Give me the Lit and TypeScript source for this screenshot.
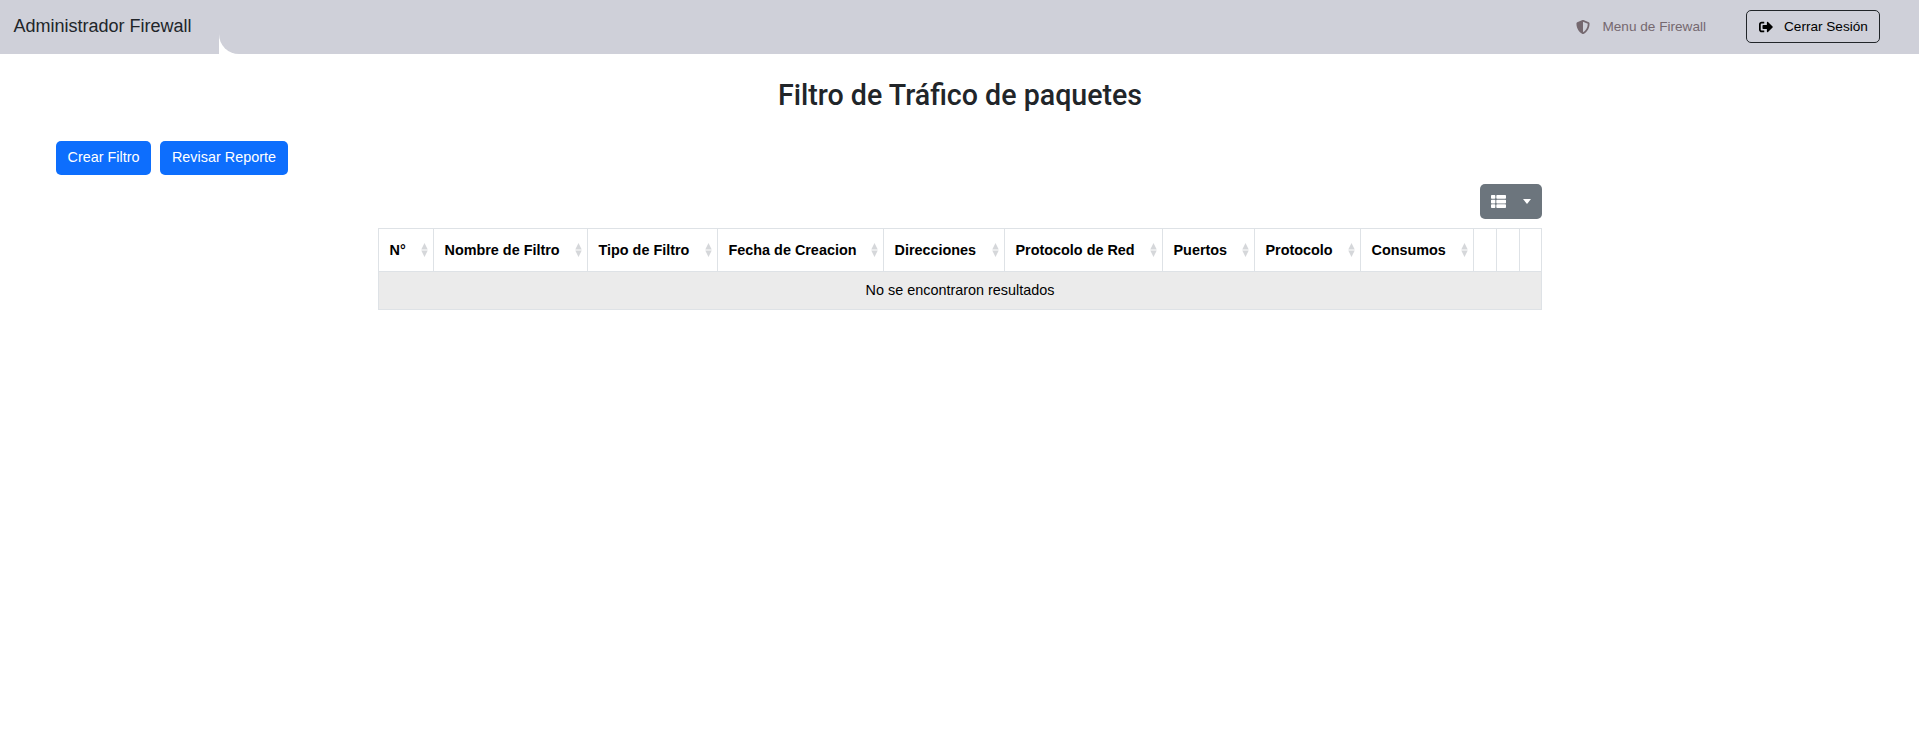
import { LitElement, html, css } from 'lit';
import { customElement } from 'lit/decorators.js';

const COLUMNS = [
    'N°', 'Nombre de Filtro', 'Tipo de Filtro', 'Fecha de Creacion', 'Direcciones',
    'Protocolo de Red', 'Puertos', 'Protocolo', 'Consumos', '', '', ''
];

@customElement('app-root')
export class AppRoot extends LitElement {
    static styles = css`
        :host {
            display: block;
            min-height: 730px;
            background: #fff;
            color: #212529;
            font-family: 'Liberation Sans', Arial, sans-serif;
            font-size: 14.4px;
        }

        * {
            box-sizing: border-box;
        }

        /* Navbar */
        .navbar {
            display: flex;
            height: 54px;
        }

        .brand {
            width: 219px;
            padding: 16px 0 0 13.5px;
            background: #cfd0d9;
            font-size: 18px;
            line-height: 20px;
            white-space: nowrap;
        }

        .nav-right {
            flex: 1;
            display: flex;
            align-items: flex-start;
            justify-content: flex-end;
            padding: 10px 39px 0 0;
            background: #cfd0d9;
            border-bottom-left-radius: 20px;
            font-size: 13.6px;
        }

        .nav-link {
            display: flex;
            align-items: center;
            height: 33px;
            margin-right: 40px;
            color: #75686f;
        }

        .nav-link svg {
            width: 14px;
            height: 14px;
            margin-right: 12px;
            fill: currentColor;
        }

        .logout {
            display: flex;
            align-items: center;
            width: 134px;
            height: 33px;
            padding-left: 12px;
            border: 1px solid #212529;
            border-radius: 5px;
            color: #000;
        }

        .logout svg {
            width: 14px;
            height: 14px;
            margin-right: 11px;
            fill: currentColor;
        }

        /* Title */
        h1 {
            margin: 0;
            padding: 22px 0 0 1px;
            text-align: center;
            font-family: Roboto, sans-serif;
            font-size: 28.6px;
            font-weight: 500;
            line-height: 38px;
        }

        /* Actions */
        .actions {
            display: flex;
            gap: 9px;
            padding: 27px 0 0 56px;
        }

        .btn {
            height: 34px;
            padding: 0 11.5px 2px;
            display: flex;
            align-items: center;
            background: #0d6efd;
            color: #fff;
            border-radius: 5px;
        }

        .btn + .btn {
            padding: 0 12px 2px;
        }

        /* Table */
        .table-wrap {
            width: 1163px;
            margin: 9px 0 0 378px;
        }

        .toolbar {
            display: flex;
            justify-content: flex-end;
            margin: 0 -1px 9px 0;
        }

        .columns-btn {
            display: flex;
            align-items: center;
            width: 62px;
            height: 35px;
            padding-left: 11px;
            background: #6c757d;
            border-radius: 5px;
        }

        .columns-btn svg {
            width: 15px;
            height: 15px;
            fill: #fff;
        }

        .caret {
            margin-left: 17px;
            border-top: 5px solid #fff;
            border-left: 4px solid transparent;
            border-right: 4px solid transparent;
        }

        table {
            width: 100%;
            table-layout: fixed;
            border-collapse: collapse;
            color: #000;
        }

        col:nth-child(1) { width: 55px; }
        col:nth-child(2) { width: 154px; }
        col:nth-child(3) { width: 130px; }
        col:nth-child(4) { width: 166px; }
        col:nth-child(5) { width: 121px; }
        col:nth-child(6) { width: 158px; }
        col:nth-child(7) { width: 92px; }
        col:nth-child(8) { width: 106px; }
        col:nth-child(9) { width: 113px; }
        col:nth-child(10) { width: 23px; }
        col:nth-child(11) { width: 23px; }
        col:nth-child(12) { width: 22px; }

        th, td {
            border: 1px solid #dee2e6;
            padding: 0;
        }

        th {
            height: 43px;
            font-weight: 700;
        }

        .th-inner {
            display: flex;
            align-items: center;
            justify-content: space-between;
            padding: 0 5.5px 0 10.5px;
            white-space: nowrap;
        }

        .sort {
            width: 7px;
            height: 14px;
            fill: #d5d7da;
        }

        td {
            height: 38px;
            padding-bottom: 2px;
            background: #ebebeb;
            text-align: center;
        }
    `;

    render() {
        return html`
            <nav class="navbar">
                <div class="brand">Administrador Firewall</div>
                <div class="nav-right">
                    <div class="nav-link">
                        <svg viewBox="0 0 512 512"><path d="M466.5 83.7l-192-80a48.15 48.15 0 0 0-36.9 0l-192 80C27.7 91.1 16 108.6 16 128c0 198.5 114.5 335.7 221.5 380.3 11.8 4.9 25.1 4.9 36.9 0C360.1 472.6 496 349.3 496 128c0-19.4-11.7-36.9-29.5-44.3zM256.1 446.3l-.1-381 175.9 73.3c-3.3 151.4-82.1 261.1-175.8 307.7z"/></svg>
                        Menu de Firewall
                    </div>
                    <div class="logout">
                        <svg viewBox="0 0 512 512"><path d="M497 273L329 441c-15 15-41 4.500-41-17v-96H152c-13.300 0-24-10.700-24-24v-96c0-13.300 10.700-24 24-24h136V88c0-21.400 25.900-32 41-17l168 168c9.300 9.400 9.300 24.600 0 34zM192 436v-40c0-6.600-5.400-12-12-12H96c-17.700 0-32-14.300-32-32V160c0-17.700 14.300-32 32-32h84c6.600 0 12-5.400 12-12V76c0-6.600-5.400-12-12-12H96c-53 0-96 43-96 96v192c0 53 43 96 96 96h84c6.600 0 12-5.400 12-12z"/></svg>
                        Cerrar Sesión
                    </div>
                </div>
            </nav>

            <h1>Filtro de Tráfico de paquetes</h1>

            <div class="actions">
                <div class="btn">Crear Filtro</div>
                <div class="btn">Revisar Reporte</div>
            </div>

            <div class="table-wrap">
                <div class="toolbar">
                    <div class="columns-btn">
                        <svg viewBox="0 0 512 512"><path d="M149.333 216v80c0 13.255-10.745 24-24 24H24c-13.255 0-24-10.745-24-24v-80c0-13.255 10.745-24 24-24h101.333c13.255 0 24 10.745 24 24zM0 376v80c0 13.255 10.745 24 24 24h101.333c13.255 0 24-10.745 24-24v-80c0-13.255-10.745-24-24-24H24c-13.255 0-24 10.745-24 24zM125.333 32H24C10.745 32 0 42.745 0 56v80c0 13.255 10.745 24 24 24h101.333c13.255 0 24-10.745 24-24V56c0-13.255-10.745-24-24-24zm80 448H488c13.255 0 24-10.745 24-24v-80c0-13.255-10.745-24-24-24H205.333c-13.255 0-24 10.745-24 24v80c0 13.255 10.745 24 24 24zm-24-424v80c0 13.255 10.745 24 24 24H488c13.255 0 24-10.745 24-24V56c0-13.255-10.745-24-24-24H205.333c-13.255 0-24 10.745-24 24zm24 264H488c13.255 0 24-10.745 24-24v-80c0-13.255-10.745-24-24-24H205.333c-13.255 0-24 10.745-24 24v80c0 13.255 10.745 24 24 24z"/></svg>
                        <span class="caret"></span>
                    </div>
                </div>
                <table>
                    <colgroup>${COLUMNS.map(() => html`<col>`)}</colgroup>
                    <thead>
                        <tr>
                            ${COLUMNS.map(name => html`
                                <th>
                                    ${name ? html`
                                        <div class="th-inner">
                                            <span>${name}</span>
                                            <svg class="sort" viewBox="0 0 6 13"><path d="M3 0l3 6H0zM3 13L0 7h6z"/></svg>
                                        </div>
                                    ` : ''}
                                </th>
                            `)}
                        </tr>
                    </thead>
                    <tbody>
                        <tr><td colspan="12">No se encontraron resultados</td></tr>
                    </tbody>
                </table>
            </div>
        `;
    }
}
